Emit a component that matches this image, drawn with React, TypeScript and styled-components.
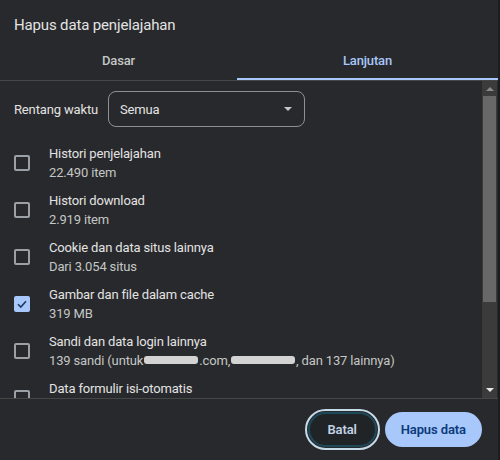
import styled, { createGlobalStyle } from 'styled-components'

const GlobalStyle = createGlobalStyle`
  html, body {
    margin: 0;
    padding: 0;
    background: #1c1d1f;
  }
  body {
    font-family: Roboto, "Noto Sans", sans-serif;
    letter-spacing: -0.15px;
  }
`

const Dialog = styled.div`
  width: 498px;
  height: 460px;
  background: #28292c;
  display: flex;
  flex-direction: column;
  color: #e3e3e3;
  font-size: 13px;
`

const Title = styled.h1`
  margin: 0;
  padding: 15px 14px 0;
  height: 25px;
  font-size: 15px;
  font-weight: 400;
  line-height: 20px;
  color: #e3e3e3;
`

const Tabs = styled.div`
  display: grid;
  grid-template-columns: 237px 1fr;
  height: 40px;
  border-bottom: 1px solid #444746;
`

const Tab = styled.div<{ active?: boolean }>`
  display: flex;
  align-items: center;
  justify-content: center;
  font-size: 13px;
  font-weight: 500;
  color: ${p => (p.active ? '#a8c7fa' : '#c4c7c5')};
  box-shadow: ${p => (p.active ? 'inset 0 -2px 0 #a8c7fa' : 'none')};
`

const Body = styled.div`
  flex: 1;
  display: flex;
  min-height: 0;
  border-bottom: 1px solid #444746;
`

const Scroll = styled.div`
  flex: 1;
  overflow: hidden;
  padding: 10px 0 0 14px;
`

const RangeRow = styled.div`
  display: flex;
  align-items: center;
  gap: 10px;
  height: 36px;
  margin-bottom: 12px;
`

const Label = styled.span`
  color: #e3e3e3;
`

const Select = styled.div`
  width: 197px;
  height: 36px;
  box-sizing: border-box;
  border: 1px solid #8e918f;
  border-radius: 8px;
  display: flex;
  align-items: center;
  justify-content: space-between;
  padding: 0 12px 0 11px;
  color: #e3e3e3;
`

const Caret = styled.span`
  width: 0;
  height: 0;
  border-left: 4px solid transparent;
  border-right: 4px solid transparent;
  border-top: 4px solid #c4c7c5;
`

const Row = styled.div`
  display: flex;
  align-items: center;
  gap: 19px;
  height: 47px;
  flex-shrink: 0;
`

const Box = styled.span<{ checked?: boolean }>`
  width: 16px;
  height: 16px;
  box-sizing: border-box;
  border-radius: 2px;
  border: 2px solid ${p => (p.checked ? '#a8c7fa' : '#9aa0a6')};
  background: ${p => (p.checked ? '#a8c7fa' : 'transparent')};
  display: flex;
  align-items: center;
  justify-content: center;
  flex-shrink: 0;
`

const Texts = styled.div`
  display: flex;
  flex-direction: column;
  line-height: 19px;
`

const Main = styled.span`
  color: #e3e3e3;
`

const Sub = styled.span`
  color: #c4c7c5;
  display: flex;
  align-items: center;
  white-space: nowrap;
`

const Blur = styled.span<{ w: number }>`
  display: inline-block;
  width: ${p => p.w}px;
  height: 8px;
  background: #d3d3d3;
  border-radius: 3px;
  margin: 0 1px;
`

const Scrollbar = styled.div`
  width: 15px;
  margin-right: 1px;
  background: #3b3b3b;
  display: flex;
  flex-direction: column;
  align-items: center;
`

const Arrow = styled.span<{ down?: boolean; dim?: boolean }>`
  width: 0;
  height: 0;
  margin: ${p => (p.down ? 'auto 0 6px' : '6px 0 5px')};
  border-left: 4px solid transparent;
  border-right: 4px solid transparent;
  ${p => (p.down ? 'border-top' : 'border-bottom')}: 4px solid ${p => (p.dim ? '#8a8a8a' : '#e8e8e8')};
`

const Thumb = styled.div`
  width: 13px;
  height: 206px;
  background: #686868;
`

const Footer = styled.div`
  height: 61px;
  display: flex;
  align-items: center;
  justify-content: flex-end;
  gap: 8px;
  padding: 0 16px 0 0;
`

const Button = styled.button<{ primary?: boolean }>`
  height: 35px;
  border-radius: 18px;
  font-family: inherit;
  font-size: 13px;
  font-weight: 600;
  letter-spacing: -0.1px;
  box-sizing: border-box;
  cursor: pointer;
  ${p =>
    p.primary
      ? `
    padding: 0 16px;
    background: #a8c7fa;
    color: #0a3a7a;
    border: none;
  `
      : `
    width: 69px;
    background: #202427;
    color: #c2d4e4;
    border: 2px solid #1c4a5a;
    outline: 2px solid #c6dae8;
    outline-offset: 1px;
  `}
`

const Check = () => (
  <svg width="12" height="12" viewBox="0 0 12 12">
    <path d="M2 6.2 L4.8 9 L10 3.2" fill="none" stroke="#1f3a5f" strokeWidth="1.6" />
  </svg>
)

const items = [
  { title: 'Histori penjelajahan', sub: '22.490 item' },
  { title: 'Histori download', sub: '2.919 item' },
  { title: 'Cookie dan data situs lainnya', sub: 'Dari 3.054 situs' },
  { title: 'Gambar dan file dalam cache', sub: '319 MB', checked: true },
]

export default function App() {
  return (
    <>
      <GlobalStyle />
      <Dialog>
        <Title>Hapus data penjelajahan</Title>
        <Tabs>
          <Tab>Dasar</Tab>
          <Tab active>Lanjutan</Tab>
        </Tabs>
        <Body>
          <Scroll>
            <RangeRow>
              <Label>Rentang waktu</Label>
              <Select>
                Semua
                <Caret />
              </Select>
            </RangeRow>
            {items.map(it => (
              <Row key={it.title}>
                <Box checked={it.checked}>{it.checked && <Check />}</Box>
                <Texts>
                  <Main>{it.title}</Main>
                  <Sub>{it.sub}</Sub>
                </Texts>
              </Row>
            ))}
            <Row>
              <Box />
              <Texts>
                <Main>Sandi dan data login lainnya</Main>
                <Sub>
                  139 sandi (untuk<Blur w={54} />.com,<Blur w={64} />, dan 137 lainnya)
                </Sub>
              </Texts>
            </Row>
            <Row>
              <Box />
              <Texts>
                <Main>Data formulir isi-otomatis</Main>
                <Sub>&nbsp;</Sub>
              </Texts>
            </Row>
          </Scroll>
          <Scrollbar>
            <Arrow dim />
            <Thumb />
            <Arrow down />
          </Scrollbar>
        </Body>
        <Footer>
          <Button>Batal</Button>
          <Button primary>Hapus data</Button>
        </Footer>
      </Dialog>
    </>
  )
}
